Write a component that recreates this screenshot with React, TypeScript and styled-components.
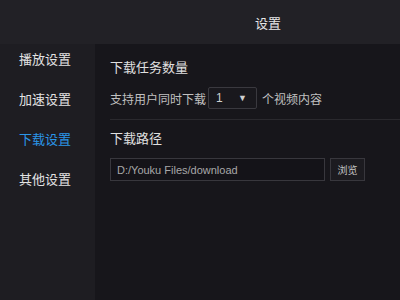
import React from 'react';
import styled, { createGlobalStyle } from 'styled-components';

const GlobalStyle = createGlobalStyle`
  html, body {
    margin: 0;
    padding: 0;
    background: #17161b;
  }
  body {
    font-family: "Liberation Sans", "Noto Sans CJK SC", sans-serif;
  }
`;

const Window = styled.div`
  width: 400px;
  height: 300px;
  display: flex;
  flex-direction: column;
  overflow: hidden;
  background: #17161b;
`;

const Header = styled.div`
  height: 44px;
  flex: none;
  background: #222126;
  display: flex;
  align-items: center;
  padding-left: 255px;
  font-size: 13px;
  color: #e6e6e6;
`;

const Body = styled.div`
  flex: 1;
  display: flex;
`;

const Sidebar = styled.div`
  width: 95px;
  flex: none;
  background: #1e1d22;
  display: flex;
  flex-direction: column;
  padding-top: 6px;
  gap: 20px;
  box-sizing: border-box;
`;

const NavItem = styled.div<{ $active?: boolean }>`
  height: 20px;
  line-height: 20px;
  padding-left: 19px;
  font-size: 13px;
  color: ${(p) => (p.$active ? '#2b96e8' : '#e2e2e2')};
`;

const Content = styled.div`
  flex: 1;
  padding: 13px 0 0 15px;
`;

const Section = styled.div<{ $divided?: boolean }>`
  padding-bottom: 10px;
  border-bottom: ${(p) => (p.$divided ? '1px solid #2a292e' : 'none')};
`;

const SectionTitle = styled.div<{ $gap?: number }>`
  font-size: 13px;
  color: #e0e0e0;
  height: 22px;
  line-height: 22px;
  margin-top: ${(p) => p.$gap ?? 0}px;
`;

const Row = styled.div`
  display: flex;
  align-items: center;
  font-size: 12px;
  color: #c0c0c0;
  margin-top: 8px;
`;

const Select = styled.div`
  width: 49px;
  height: 22px;
  box-sizing: border-box;
  border: 1px solid #3a393f;
  border-radius: 2px;
  background: #19181d;
  display: flex;
  align-items: center;
  justify-content: space-between;
  padding: 0 9px 0 7px;
  margin: 0 5px 0 2px;
  font-size: 12px;
  color: #d0d0d0;
`;

const Arrow = styled.span`
  font-size: 9px;
  color: #d0d0d0;
`;

const PathInput = styled.div`
  width: 215px;
  height: 23px;
  box-sizing: border-box;
  border: 1px solid #38373d;
  background: #141318;
  display: flex;
  align-items: center;
  padding-left: 6px;
  margin-right: 5px;
  font-size: 11px;
  color: #a8a8a8;
`;

const Button = styled.div`
  width: 35px;
  height: 23px;
  box-sizing: border-box;
  border: 1px solid #38373d;
  background: #1c1b20;
  display: flex;
  align-items: center;
  justify-content: center;
  font-size: 10px;
  color: #c4c4c4;
`;

const nav = ['播放设置', '加速设置', '下载设置', '其他设置'];

export default function App() {
  return (
    <Window>
      <GlobalStyle />
      <Header>设置</Header>
      <Body>
        <Sidebar>
          {nav.map((n, i) => (
            <NavItem key={n} $active={i === 2}>
              {n}
            </NavItem>
          ))}
        </Sidebar>
        <Content>
          <Section $divided>
            <SectionTitle>下载任务数量</SectionTitle>
            <Row>
              <span>支持用户同时下载</span>
              <Select>
                <span>1</span>
                <Arrow>▼</Arrow>
              </Select>
              <span>个视频内容</span>
            </Row>
          </Section>
          <Section>
            <SectionTitle $gap={8}>下载路径</SectionTitle>
            <Row>
              <PathInput>D:/Youku Files/download</PathInput>
              <Button>浏览</Button>
            </Row>
          </Section>
        </Content>
      </Body>
    </Window>
  );
}
